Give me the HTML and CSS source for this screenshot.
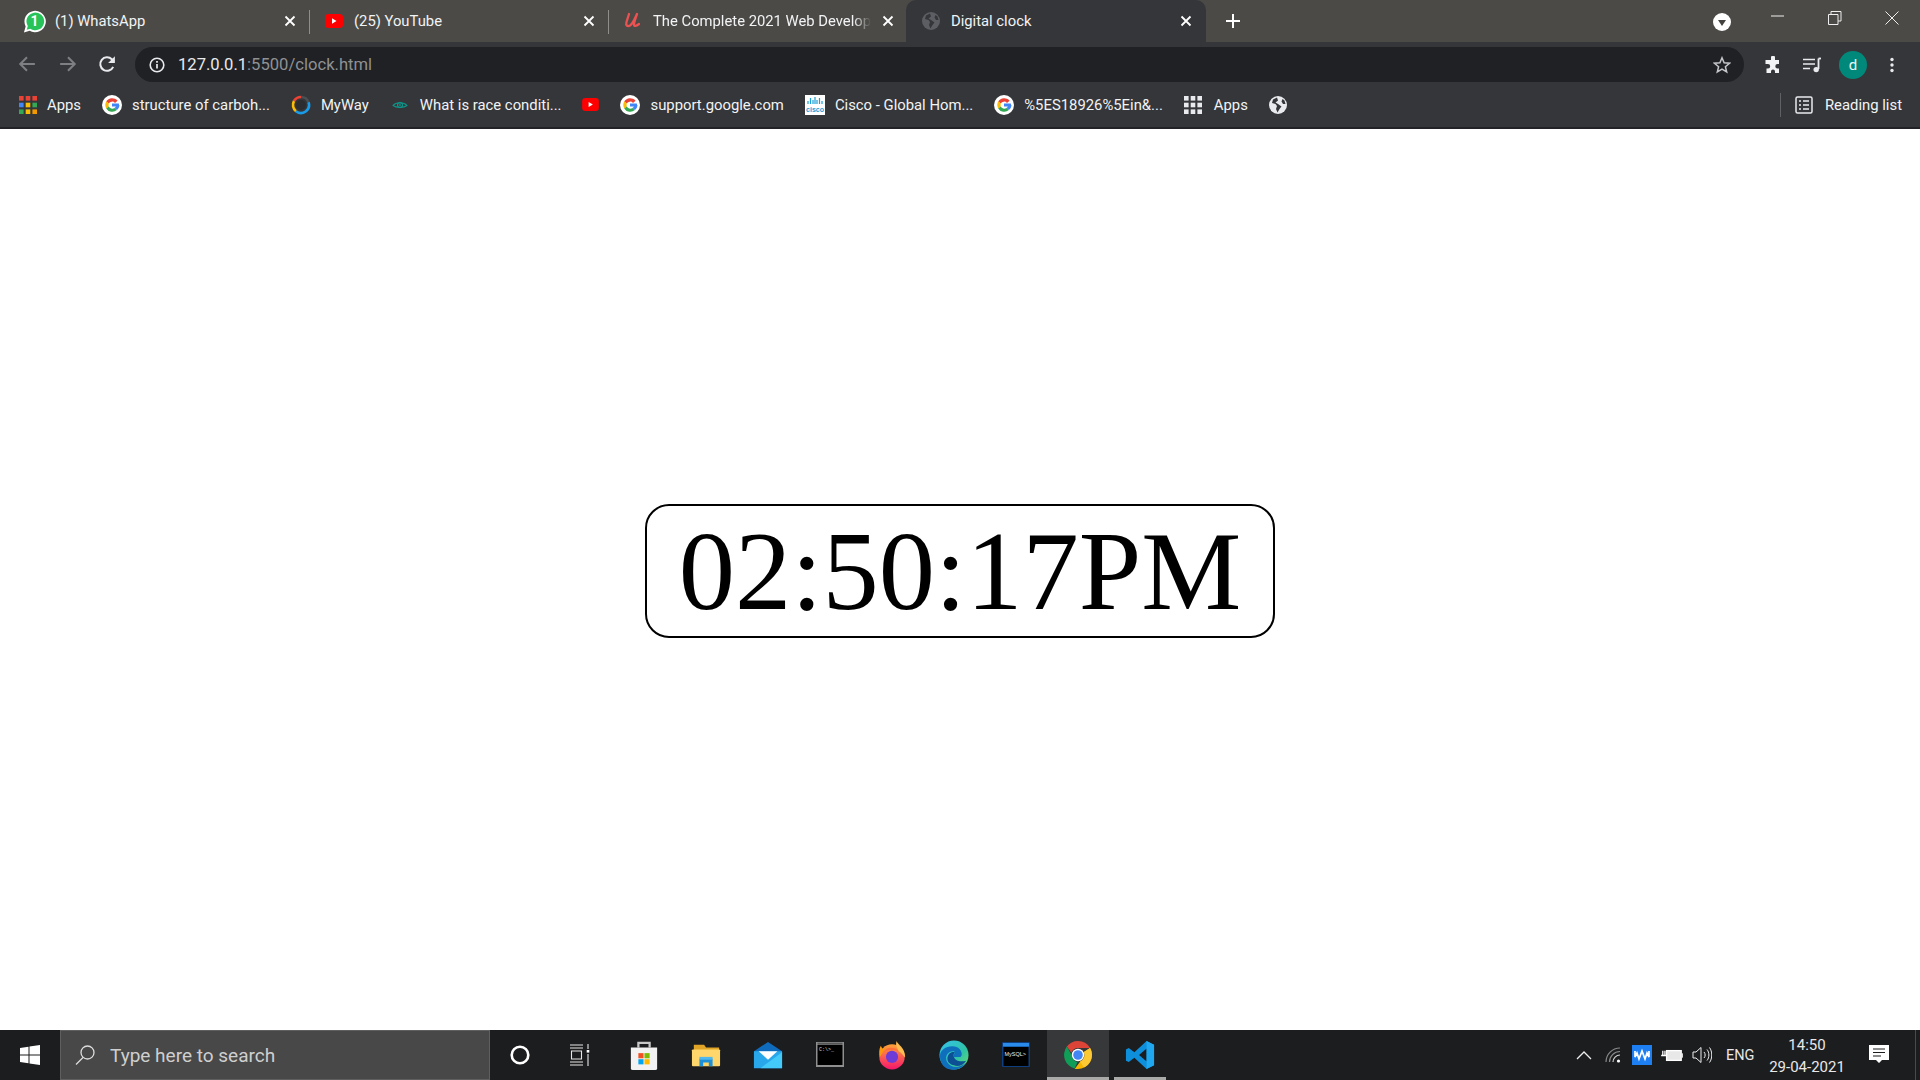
FILE: index.html
```html
<!DOCTYPE html>
<html lang="en">
<head>
<meta charset="utf-8">
<title>Digital clock</title>
<link rel="stylesheet" href="styles.css">
</head>
<body>
<svg class="defs" width="0" height="0">
  <defs>
    <symbol id="g" viewBox="0 0 20 20">
      <circle cx="10" cy="10" r="10" fill="#fff"/>
      <path d="M15.6 5.8A7 7 0 0 0 4.2 6.6l2.6 2A3.8 3.8 0 0 1 13 7.9z" fill="#ea4335"/>
      <path d="M4.2 6.6a7 7 0 0 0 0 6.8l2.6-2a3.8 3.8 0 0 1 0-2.8z" fill="#fbbc05"/>
      <path d="M4.2 13.4a7 7 0 0 0 10.7 1.6l-2.5-2a3.8 3.8 0 0 1-5.6-1.6z" fill="#34a853"/>
      <path d="M17 10c0-.5 0-1-.2-1.5H10v3h3.9c-.2.6-.7 1.200-1.500 1.500l2.500 2c1.600-1.300 2.600-3.200 2.600-5z" fill="#4285f4"/>
    </symbol>
    <symbol id="yt" viewBox="0 0 18 14">
      <rect width="18" height="14" rx="3.500" fill="#f00"/>
      <path d="M7 4.300 11.500 7 7 9.700z" fill="#fff"/>
    </symbol>
    <symbol id="globe" viewBox="0 0 18 18">
      <circle cx="9" cy="9" r="9" fill="currentColor"/>
      <path d="M8 1.500 4 3.500 3 7l3.500 1 1.500 2-1 3 1.500 3.500L10.500 13l2-2.500L9 8 6.500 6.500 9 4.500zM12.500 5.500 14 8h2.500l-1-3.500-2-1.500z" fill="var(--globe-cut)"/>
    </symbol>
    <symbol id="x" viewBox="0 0 12 12">
      <path d="M1.500 1.500l9 9M10.500 1.500l-9 9" stroke="#fff" stroke-width="1.800" fill="none"/>
    </symbol>
  </defs>
</svg>

<div class="page">
  <header class="tabstrip">
    <div class="tab">
      <svg class="fav fav-wa" viewBox="0 0 20 20"><path d="M.8 19.500l1.500-5.200A9.300 9.300 0 1 1 5.800 18z" fill="#fff"/><path d="M3.200 17.200l1-3.200A7.700 7.700 0 1 1 6.300 16.200z" fill="#25c35a"/><text class="wa-num" x="10" y="14">1</text></svg>
      <span class="tab-title">(1) WhatsApp</span>
      <svg class="close"><use href="#x"/></svg>
    </div>
    <div class="tab">
      <svg class="fav-yt"><use href="#yt"/></svg>
      <span class="tab-title">(25) YouTube</span>
      <svg class="close"><use href="#x"/></svg>
    </div>
    <div class="tab tab-udemy">
      <svg class="fav" viewBox="0 0 20 20"><path d="M6 3 3.500 11c-1 3.500 1 5 3.500 3.500C10 12.500 12 7 14 3c-1.500 4-3 8-3 10.500 0 2 2 2 5-.5" fill="none" stroke="#ec5252" stroke-width="2.300" stroke-linecap="round" stroke-linejoin="round"/></svg>
      <span class="tab-title"><span class="tab-fade">The Complete 2021 Web Develop</span></span>
      <svg class="close"><use href="#x"/></svg>
    </div>
    <div class="tab tab-active">
      <svg class="fav globe-tab"><use href="#globe"/></svg>
      <span class="tab-title">Digital clock</span>
      <svg class="close"><use href="#x"/></svg>
    </div>
    <svg class="plus" viewBox="0 0 16 16"><path d="M8 1v14M1 8h14" stroke="#fff" stroke-width="2"/></svg>
    <div class="strip-fill"></div>
    <svg class="tab-search" viewBox="0 0 18 18"><circle cx="9" cy="9" r="9" fill="#fff"/><path d="M5 7h8l-4 6z" fill="#45433f"/></svg>
    <div class="winctl">
      <svg viewBox="0 0 14 14"><path d="M0 5h13" stroke="#eee" stroke-width="1"/></svg>
      <svg viewBox="0 0 14 14"><path d="M.5 3.500h9.500v10H.5zM3 3.500V.5h10v9.500h-3" stroke="#eee" fill="none"/></svg>
      <svg viewBox="0 0 14 14"><path d="M.5.500l13 13M13.500.500l-13 13" stroke="#eee" fill="none"/></svg>
    </div>
  </header>

  <nav class="toolbar">
    <svg class="nav-ico" viewBox="0 0 16 16"><path d="M15 8H2M8 2 2 8l6 6" stroke="#7d7f82" stroke-width="1.800" fill="none"/></svg>
    <svg class="nav-ico" viewBox="0 0 16 16"><path d="M1 8h13M8 2l6 6-6 6" stroke="#7d7f82" stroke-width="1.800" fill="none"/></svg>
    <svg class="nav-ico" viewBox="0 0 16 16"><path d="M13.500 10.500A6 6 0 1 1 12.300 3.800L14 5.500" stroke="#e8eaed" stroke-width="1.800" fill="none"/><path d="M15 1v6H9z" fill="#e8eaed"/></svg>
    <div class="omnibox">
      <svg class="info" viewBox="0 0 16 16"><circle cx="8" cy="8" r="6.800" stroke="#e8eaed" stroke-width="1.600" fill="none"/><path d="M8 7v4.500M8 4v1.800" stroke="#e8eaed" stroke-width="1.700"/></svg>
      <span class="url"><span class="url-host">127.0.0.1</span>:5500/clock.html</span>
      <svg class="star" viewBox="0 0 18 18"><path d="M9 1.800l2.100 5 5.400.4-4.100 3.500 1.300 5.300L9 13.200 4.300 16l1.300-5.300L1.500 7.200l5.400-.4z" stroke="#c4c6c9" stroke-width="1.500" fill="none"/></svg>
    </div>
    <div class="tool-icons">
      <svg class="puzzle" viewBox="0 0 18 18"><path d="M7 1.500a2 2 0 0 1 4 0V4h4v4h-1.500a2.200 2.200 0 0 0 0 4.400H15V17h-4v-1.500a2 2 0 0 0-4 0V17H2.500v-4.500H4a2.200 2.200 0 0 0 0-4.400H1.500V4H7z" fill="#f1f3f4"/></svg>
      <svg class="media" viewBox="0 0 20 16"><path d="M1 2.500h12M1 7h12M1 11.500h7" stroke="#e8eaed" stroke-width="1.600"/><path d="M16.500 1.500V12" stroke="#e8eaed" stroke-width="1.800"/><path d="M16.500 1.500H19" stroke="#e8eaed" stroke-width="1.800"/><circle cx="14.200" cy="12.600" r="2.700" fill="#e8eaed"/></svg>
      <div class="avatar">d</div>
      <svg class="kebab" viewBox="0 0 4 16"><circle cx="2" cy="2.500" r="1.700" fill="#e8eaed"/><circle cx="2" cy="8" r="1.700" fill="#e8eaed"/><circle cx="2" cy="13.500" r="1.700" fill="#e8eaed"/></svg>
    </div>
  </nav>

  <div class="bookmarks">
    <div class="bm">
      <svg class="bm-ico apps-grid" viewBox="0 0 18 18">
        <rect width="4.600" height="4.600" fill="#ea4335"/><rect x="6.700" width="4.600" height="4.600" fill="#ea4335"/><rect x="13.400" width="4.600" height="4.600" fill="#ea4335"/>
        <rect y="6.700" width="4.600" height="4.600" fill="#4285f4"/><rect x="6.700" y="6.700" width="4.600" height="4.600" fill="#fbbc05"/><rect x="13.400" y="6.700" width="4.600" height="4.600" fill="#34a853"/>
        <rect y="13.400" width="4.600" height="4.600" fill="#34a853"/><rect x="6.700" y="13.400" width="4.600" height="4.600" fill="#fbbc05"/><rect x="13.400" y="13.400" width="4.600" height="4.600" fill="#f29900"/>
      </svg>
      <span>Apps</span>
    </div>
    <div class="bm"><svg class="bm-ico"><use href="#g"/></svg><span>structure of carboh...</span></div>
    <div class="bm"><svg class="bm-ico" viewBox="0 0 20 20"><path d="M10 2a8 8 0 0 1 7.500 5.200" stroke="#4a4f52" stroke-width="2.600" fill="none"/><path d="M3 6A8 8 0 0 1 10 2" stroke="#ea4335" stroke-width="2.600" fill="none"/><path d="M5 16.200A8 8 0 0 1 3 6" stroke="#fbbc05" stroke-width="2.600" fill="none"/><path d="M17.500 7.200A8 8 0 0 1 5 16.200" stroke="#1a9be8" stroke-width="2.600" fill="none"/><circle cx="10" cy="10" r="5" fill="#2c2d30"/></svg><span>MyWay</span></div>
    <div class="bm"><svg class="bm-ico" viewBox="0 0 20 20"><path d="M3 10.500c3-3.500 11-3.500 14 0-3 2.500-11 2.500-14 0z" fill="none" stroke="#0e9488" stroke-width="1.100"/><circle cx="10" cy="10" r="2.500" fill="none" stroke="#0e9488" stroke-width="1.200"/><circle cx="10" cy="10" r=".9" fill="#0e9488"/></svg><span>What is race conditi...</span></div>
    <div class="bm bm-solo"><svg class="bm-yt"><use href="#yt"/></svg></div>
    <div class="bm"><svg class="bm-ico"><use href="#g"/></svg><span>support.google.com</span></div>
    <div class="bm"><svg class="bm-ico" viewBox="0 0 20 20"><rect width="20" height="20" fill="#fff"/><path d="M3 9V6M5.500 9V3M8 9V5M10 9V2M12 9V5M14.500 9V3M17 9V6" stroke="#1ba0d7" stroke-width="1.200"/><text class="cisco" x="10" y="17">cisco</text></svg><span>Cisco - Global Hom...</span></div>
    <div class="bm"><svg class="bm-ico"><use href="#g"/></svg><span>%5ES18926%5Ein&amp;...</span></div>
    <div class="bm bm-apps2">
      <svg class="bm-ico apps-grid" viewBox="0 0 18 18" fill="#e8eaed">
        <rect width="4.600" height="4.600"/><rect x="6.700" width="4.600" height="4.600"/><rect x="13.400" width="4.600" height="4.600"/>
        <rect y="6.700" width="4.600" height="4.600"/><rect x="6.700" y="6.700" width="4.600" height="4.600"/><rect x="13.400" y="6.700" width="4.600" height="4.600"/>
        <rect y="13.400" width="4.600" height="4.600"/><rect x="6.700" y="13.400" width="4.600" height="4.600"/><rect x="13.400" y="13.400" width="4.600" height="4.600"/>
      </svg>
      <span>Apps</span>
    </div>
    <div class="bm bm-solo"><svg class="bm-globe"><use href="#globe"/></svg></div>
    <div class="bm-fill"></div>
    <div class="reading">
      <svg class="bm-read" viewBox="0 0 18 18"><rect x="1" y="1" width="16" height="16" rx="1.500" fill="none" stroke="#e8eaed" stroke-width="1.500"/><path d="M4 5h2M4 9h2M4 13h2M8 5h6M8 9h6M8 13h6" stroke="#e8eaed" stroke-width="1.500"/></svg>
      <span>Reading list</span>
    </div>
  </div>

  <main class="content">
    <div class="clock">02:50:17PM</div>
  </main>

  <footer class="taskbar">
    <div class="start"><svg viewBox="0 0 20 20"><path d="M0 3l8.500-1.200V9.500H0zM9.500 1.600 20 0v9.500H9.500zM0 10.500h8.500v7.700L0 17zM9.500 10.500H20V20L9.500 18.400z" fill="#fff"/></svg></div>
    <div class="search">
      <svg viewBox="0 0 20 20"><circle cx="12.500" cy="7.500" r="6.500" stroke="#ddd" stroke-width="1.300" fill="none"/><path d="M8 12.500 1 19.500" stroke="#ddd" stroke-width="1.300"/></svg>
      <span>Type here to search</span>
    </div>
    <div class="tasks">
      <div class="task"><svg class="t20" viewBox="0 0 20 20"><circle cx="10" cy="10" r="8.300" stroke="#fff" stroke-width="2.600" fill="none"/></svg></div>
      <div class="task task-view"><svg class="t22" viewBox="0 0 20 22"><path d="M0 1h13M0 4h13M0 18h13M0 21h13M1.500 7h10v8h-10zM18 0v5M18 10v12" stroke="#e8e8e8" stroke-width="1.100" fill="none"/><rect x="16.700" y="6" width="2.600" height="2.600" fill="#fff"/></svg></div>
      <div class="task"><svg class="t32" viewBox="0 0 32 32"><path d="M10 8V3h12v5" stroke="#c8c8c8" stroke-width="2.400" fill="none"/><path d="M2 8h28v22a2 2 0 0 1-2 2H4a2 2 0 0 1-2-2z" fill="#f2f2f2"/><rect x="10" y="14" width="5.500" height="5.500" fill="#f25022"/><rect x="16.500" y="14" width="5.500" height="5.500" fill="#7fba00"/><rect x="10" y="20.500" width="5.500" height="5.500" fill="#00a4ef"/><rect x="16.500" y="20.500" width="5.500" height="5.500" fill="#ffb900"/></svg></div>
      <div class="task"><svg class="t32" viewBox="0 0 32 32"><path d="M3 5h11l2 3h14v4H3z" fill="#e0a526"/><path d="M2 10h28a1 1 0 0 1 1 1v16a1 1 0 0 1-1 1H2a1 1 0 0 1-1-1V11a1 1 0 0 1 1-1z" fill="#ffd66b"/><path d="M9 28v-8h14v8h-4v-4h-6v4z" fill="#1e90d8"/><rect x="9" y="18" width="14" height="3" fill="#4fb8ee"/></svg></div>
      <div class="task"><svg class="t32" viewBox="0 0 32 32"><path d="M1 12 16 2l15 10v18H1z" fill="#0f6cbd"/><path d="M1 12h30v18H1z" fill="#28a8ea"/><path d="M6 12h20l-10 9z" fill="#fff"/><path d="M31 13v17H8z" fill="#50d9ff" opacity=".7"/></svg></div>
      <div class="task"><svg class="t28" viewBox="0 0 28 26"><rect width="28" height="25" fill="#8f8f8f"/><rect x="1.500" y="3" width="25" height="20" fill="#000"/><rect x="1.500" y=".7" width="25" height="2" fill="#555"/><text class="cmd" x="3" y="9">C:\&gt;_</text></svg></div>
      <div class="task"><svg class="t32" viewBox="0 0 32 32"><defs><linearGradient id="ff" x1="0" y1="0" x2="0" y2="1"><stop offset="0" stop-color="#ffa436"/><stop offset="1" stop-color="#f5156c"/></linearGradient></defs><circle cx="16" cy="18" r="13.500" fill="url(#ff)"/><path d="M21 1c1 4 9 7 9 17 0 2-3-4-7-6-1-4-4-6-2-11z" fill="#ffbd4f"/><path d="M4 6c-2 4-2 8-1 12 2-2 3-6 5-8 1-1 0-3-1-1-1 1-2-1-3-3z" fill="#ff980e"/><circle cx="16" cy="18" r="6.500" fill="#6e3bd6"/><path d="M7 13c3-6 12-6 16-1-5-2-11-2-16 1z" fill="#ff7139"/></svg></div>
      <div class="task"><svg class="t32" viewBox="0 0 32 32"><defs><linearGradient id="eg" x1="0" y1="0" x2="1" y2="1"><stop offset="0" stop-color="#35c1f1"/><stop offset=".6" stop-color="#2fc4a4"/><stop offset="1" stop-color="#6fdc6f"/></linearGradient></defs><circle cx="16" cy="16" r="15.500" fill="url(#eg)"/><path d="M1 17C1 9 12 4 20 8c5 3 5 9 3 10h-7c-1-3 2-5 0-6-5-1-10 4-8 10 2 5 8 8 14 6 3-1 5-2 7-4-4 7-13 9-19 7C4 29 1 23 1 17z" fill="#0f6fbd"/><path d="M9 20c0-5 4-8 8-7-2 2-2 5 1 8 3 2 7 2 11 1-3 5-9 7-13 5-4-1-7-3-7-7z" fill="#0c4f94"/></svg></div>
      <div class="task"><svg class="t28" viewBox="0 0 28 26"><rect width="28" height="25" rx="1" fill="#0f3e7e"/><rect x="1" y="1" width="26" height="3.500" fill="#2a8bea"/><rect x="1.500" y="5" width="25" height="19" fill="#000"/><text class="mysql" x="2.500" y="14">MySQL&gt;</text></svg></div>
      <div class="task task-open task-active"><svg class="t28c" viewBox="0 0 28 28"><path d="M14 0a14 14 0 0 1 12.100 7H14a7 7 0 0 0-6.600 4.700L2.800 5.600A14 14 0 0 1 14 0z" fill="#db4437"/><path d="M2.800 5.600l5.500 9.500a6.500 6.500 0 0 0 5.200 6L10.700 27.500A14 14 0 0 1 2.800 5.600z" fill="#0f9d58"/><path d="M26.100 7A14 14 0 0 1 14 28h-3.300l5.500-7.500A7 7 0 0 0 19.800 11z" fill="#f4b400"/><path d="M26.100 7A14 14 0 0 1 20 26.500L16 20.800A7 7 0 0 0 19.800 11z" fill="#fcc934"/><circle cx="14" cy="14" r="6.200" fill="#fff"/><circle cx="14" cy="14" r="4.800" fill="#4285f4"/></svg></div>
      <div class="task task-open"><svg class="t32" viewBox="0 0 32 32"><path d="M23 1l8 4v22l-8 4-13-12-6 4.500L1 22V10l3-1.500L10 13zM23 9l-8 7 8 7z" fill="#0d8fdc"/><path d="M23 1l8 4v22l-8 4z" fill="#1fa8f0"/></svg></div>
    </div>
    <div class="task-fill"></div>
    <div class="tray">
      <svg class="tr-chev" viewBox="0 0 16 10"><path d="M1 9l7-7 7 7" stroke="#eee" stroke-width="1.300" fill="none"/></svg>
      <svg class="tr-wifi" viewBox="0 0 16 16"><path d="M1 15A14 14 0 0 1 15 1M4.500 15A10.500 10.500 0 0 1 15 4.500" stroke="#8a8a8a" stroke-width="1.200" fill="none"/><path d="M8 15A7 7 0 0 1 15 8" stroke="#d0d0d0" stroke-width="1.200" fill="none"/><circle cx="13.500" cy="14" r="1.600" fill="#fff"/></svg>
      <svg class="tr-w" viewBox="0 0 20 20"><rect width="20" height="20" fill="#1e7ff2"/><path d="M3 6v6l2-4 2 6 3-8 3 8 2-6 2 4V6" stroke="#fff" stroke-width="1.700" fill="none"/></svg>
      <svg class="tr-batt" viewBox="0 0 20 12"><rect x="5" y="1.500" width="13.500" height="9" fill="#e8e8e8" stroke="#fff" stroke-width="1.200"/><rect x="19" y="4" width="1" height="4" fill="#fff"/><path d="M0 6h4.500M1.500 1.500v4M3.500 1.500v4" stroke="#fff" stroke-width="1.200"/></svg>
      <svg class="tr-vol" viewBox="0 0 20 18"><path d="M1 6h3l5-4.500v15L4 12H1z" stroke="#eee" fill="none"/><path d="M12 6c1.500 1.500 1.500 4.500 0 6M15 3.500c2.500 3 2.500 8 0 11M17.500 1.500c3 4 3 11 0 15" stroke="#eee" fill="none"/></svg>
      <span class="tr-lang">ENG</span>
      <div class="tr-clock"><span>14:50</span><span>29-04-2021</span></div>
      <svg class="tr-note" viewBox="0 0 20 20"><path d="M0 0h20v15h-7l-3 3-3-3H0z" fill="#fff"/><path d="M4 4h12M4 7.500h12M4 11h8" stroke="#1c1d1f" stroke-width="1.200"/></svg>
      <div class="tr-desk"></div>
    </div>
  </footer>
</div>
</body>
</html>
```
FILE: styles.css
```css
* { box-sizing: border-box; }
html, body { margin: 0; padding: 0; height: 100%; }
body { font-family: Roboto, "Liberation Sans", sans-serif; background: #fff; overflow: hidden; }
.defs { position: absolute; }
.page { display: flex; flex-direction: column; height: 1080px; --globe-cut: #35363a; }

.tabstrip { height: 42px; flex: none; background: #4c4a47; display: flex; align-items: center; padding-left: 11px; color: #f1f3f4; }
.tab { width: 299px; height: 42px; flex: none; display: flex; align-items: center; padding: 0 14px 0 14px; position: relative; font-size: 14.8px; }
.tab::after { content: ""; position: absolute; right: 0; top: 10px; bottom: 8px; width: 1px; background: #8f8e8b; }
.tab-active { background: #35363a; border-radius: 10px 10px 0 0; width: 300px; margin-left: -2px; padding-left: 16px; }
.tab-active::after, .tab-udemy::after { display: none; }
.fav { width: 20px; height: 20px; flex: none; }
.fav-wa { width: 23px; height: 23px; margin: 0 -2px 0 -2px; }
.globe-tab { width: 18px; height: 18px; color: #5c5e63; }
.fav-yt { width: 18px; height: 14px; flex: none; margin-left: 1px; }
.tab-title { flex: 1; margin-left: 11px; white-space: nowrap; }
.tab-udemy .tab-title { margin-left: 10px; }
.tab-fade { display: inline-block; -webkit-mask-image: linear-gradient(to right, #000 92%, transparent); mask-image: linear-gradient(to right, #000 92%, transparent); }
.close { width: 12px; height: 12px; flex: none; }
.wa-num { font-size: 12px; font-weight: 700; fill: #fff; text-anchor: middle; font-family: Roboto, sans-serif; }
.plus { width: 16px; height: 16px; margin-left: 19px; flex: none; }
.strip-fill { flex: 1; }
.tab-search { width: 18px; height: 18px; flex: none; margin-right: 40px; margin-top: 2px; }
.winctl { display: flex; gap: 43px; align-self: flex-start; margin: 11px 21px 0 0; }
.winctl svg { width: 14px; height: 14px; display: block; }

.toolbar { height: 46px; flex: none; background: #35363a; display: flex; align-items: flex-start; padding: 5px 0 0 18px; }
.nav-ico { width: 18px; height: 18px; flex: none; margin: 8px 23px 0 0; }
.nav-ico:nth-of-type(3) { margin-right: 0; margin-left: -2px; }
.omnibox { width: 1609px; height: 35px; flex: none; margin-left: 19px; background: #202124; border-radius: 18px; display: flex; align-items: center; padding: 0 13px 0 14px; font-size: 16.6px; color: #8f9194; }
.info { width: 16px; height: 16px; flex: none; }
.url { flex: 1; margin-left: 13px; white-space: nowrap; }
.url-host { color: #e8eaed; }
.star { width: 18px; height: 18px; flex: none; }
.tool-icons { display: flex; align-items: center; height: 35px; margin-left: 20px; }
.puzzle { width: 18px; height: 18px; }
.media { width: 20px; height: 16px; margin-left: 20px; }
.avatar { width: 28px; height: 28px; border-radius: 50%; background: #00897b; color: #e8f5f3; font-size: 15px; display: flex; align-items: center; justify-content: center; margin-left: 17px; }
.kebab { width: 4px; height: 16px; margin-left: 23px; }

.bookmarks { height: 41px; flex: none; background: #35363a; border-bottom: 2px solid #222326; display: flex; align-items: center; padding: 0 18px 6px 19px; font-size: 14.85px; color: #f1f3f4; gap: 21px; white-space: nowrap; }
.bm { display: flex; align-items: center; gap: 10px; flex: none; }
.bm-apps2 { gap: 12px; }
.bm-ico { width: 20px; height: 20px; flex: none; }
.apps-grid { width: 18px; height: 18px; }
.bm-yt { width: 17px; height: 13px; display: block; }
.bm-globe { width: 18px; height: 18px; display: block; color: #e8eaed; }
.bm-fill { flex: 1; }
.reading { display: flex; align-items: center; gap: 12px; padding-left: 14px; border-left: 1px solid #5f6063; height: 24px; }
.bm-read { width: 18px; height: 18px; }
.cisco { font-size: 7px; font-weight: 700; fill: #1ba0d7; text-anchor: middle; font-family: "Liberation Sans", sans-serif; }

.content { flex: 1; background: #fff; padding-top: 375px; display: flex; flex-direction: column; align-items: center; }
.clock { width: 630px; border: 2px solid #000; border-radius: 24px; text-align: center; font-family: "Liberation Serif", serif; font-size: 112.5px; line-height: 130px; color: #000; }

.taskbar { height: 50px; flex: none; background: #1c1d1f; display: flex; align-items: stretch; color: #e8e8e8; }
.start { width: 60px; flex: none; display: flex; align-items: center; justify-content: center; }
.start svg { width: 20px; height: 20px; }
.search { width: 430px; flex: none; background: #484848; border: 1px solid #5f5f5f; display: flex; align-items: center; padding-left: 14px; color: #cfcfcf; font-size: 19px; }
.search svg { width: 20px; height: 20px; flex: none; }
.search span { margin-left: 15px; }
.tasks { display: flex; margin-left: -1px; }
.task { width: 62px; flex: none; display: flex; align-items: center; justify-content: center; position: relative; }
.task-view { padding-right: 4px; }
.task-active { background: #37383a; }
.task-open::after { content: ""; position: absolute; left: 5px; right: 5px; bottom: 0; height: 3px; background: #a9a9a7; }
.task-active::after { left: 0; right: 0; }
.t20 { width: 20px; height: 20px; }
.t22 { width: 20px; height: 22px; }
.t32 { width: 30px; height: 30px; }
.t28 { width: 28px; height: 26px; }
.t28c { width: 28px; height: 28px; }
.cmd { font-size: 5px; fill: #ddd; font-family: "Liberation Mono", monospace; }
.mysql { font-size: 5.500px; fill: #eee; font-family: "Liberation Sans", sans-serif; }
.task-fill { flex: 1; }
.tray { display: flex; align-items: center; font-size: 14.500px; }
.tr-chev { width: 16px; height: 10px; margin-right: 13px; }
.tr-wifi { width: 16px; height: 16px; margin-right: 11px; }
.tr-w { width: 20px; height: 20px; margin-right: 9px; }
.tr-batt { width: 22px; height: 13px; margin-right: 9px; }
.tr-vol { width: 20px; height: 18px; margin-right: 14px; }
.tr-lang { width: 30px; }
.tr-clock { display: flex; flex-direction: column; align-items: center; width: 78px; margin-left: 12px; font-size: 15px; line-height: 22px; margin-top: 1px; }
.tr-note { width: 20px; height: 20px; margin-left: 23px; }
.tr-desk { width: 1px; height: 50px; background: #4a4a4a; margin-left: 26px; margin-right: 4px; }
```
